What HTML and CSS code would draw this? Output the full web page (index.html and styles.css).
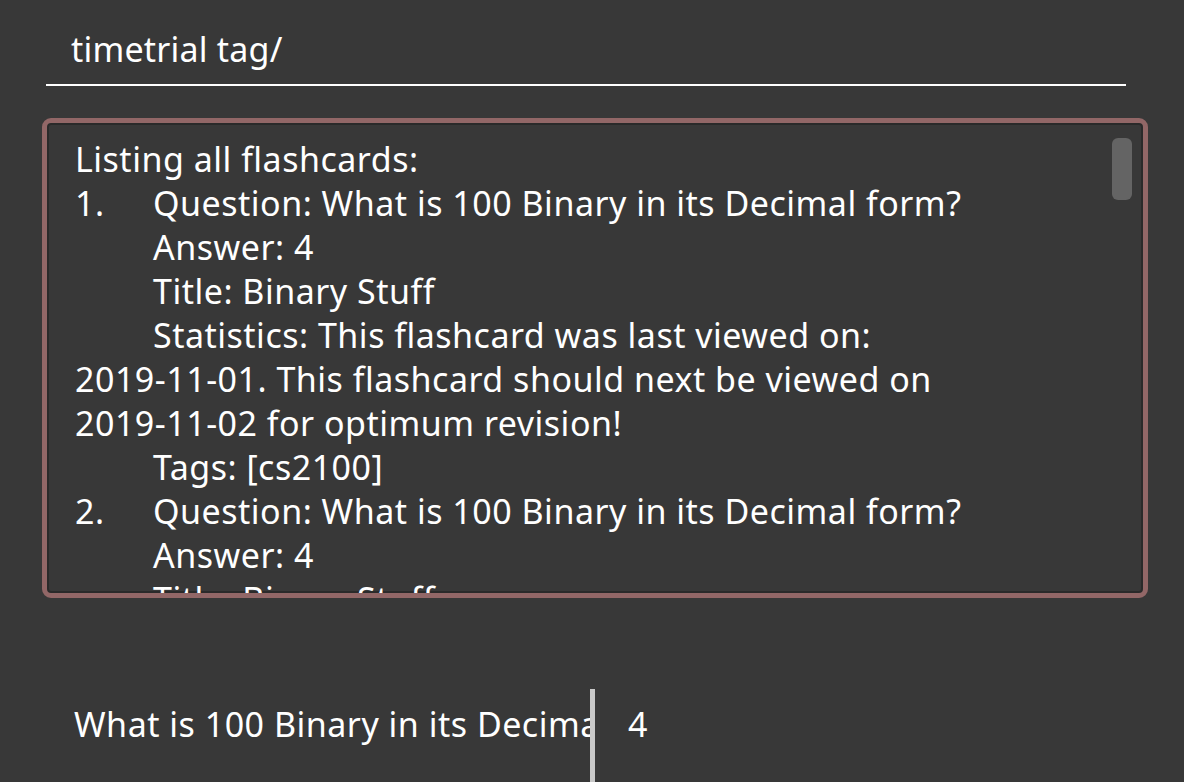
FILE: index.html
```html
<!DOCTYPE html>
<html>
<head>
<meta charset="utf-8">
<link rel="stylesheet" href="styles.css">
</head>
<body>
<div class="app">
  <div class="command">timetrial tag/</div>
  <div class="result">
    <div class="result-text">
      <div class="line">Listing all flashcards:</div>
      <div class="line"><span class="num">1.</span>Question: What is 100 Binary in its Decimal form?</div>
      <div class="line indent">Answer: 4</div>
      <div class="line indent">Title: Binary Stuff</div>
      <div class="line indent">Statistics: This flashcard was last viewed on:</div>
      <div class="line">2019-11-01. This flashcard should next be viewed on</div>
      <div class="line">2019-11-02 for optimum revision!</div>
      <div class="line indent">Tags: [cs2100]</div>
      <div class="line"><span class="num">2.</span>Question: What is 100 Binary in its Decimal form?</div>
      <div class="line indent">Answer: 4</div>
      <div class="line indent">Title: Binary Stuff</div>
      <div class="line indent">Statistics: This flashcard was last viewed on:</div>
    </div>
    <div class="thumb"></div>
  </div>
  <div class="table-row">
    <div class="cell question">What is 100 Binary in its Decimal form?</div>
    <div class="divider"></div>
    <div class="cell answer">4</div>
  </div>
</div>
</body>
</html>
```
FILE: styles.css
```css
html, body {
  margin: 0;
  padding: 0;
  background: #383838;
}
body {
  font-family: "Noto Sans", "Open Sans", sans-serif;
  font-size: 34px;
  letter-spacing: 0.5px;
  color: #ffffff;
}
.app {
  display: flex;
  flex-direction: column;
  width: 1184px;
  height: 782px;
  padding-left: 42px;
  box-sizing: border-box;
  overflow: hidden;
}
.command {
  margin-left: 4px;
  width: 1080px;
  box-sizing: border-box;
  padding: 27px 0 13px 25px;
  line-height: 44px;
  border-bottom: 2px solid #ffffff;
  white-space: nowrap;
  letter-spacing: 0.2px;
}
.result {
  position: relative;
  margin-top: 32px;
  width: 1106px;
  height: 480px;
  box-sizing: border-box;
  border: 5px solid #926767;
  border-radius: 9px;
  box-shadow: inset 0 0 0 2px #2a2a2a;
  overflow: hidden;
  flex: none;
}
.result-text {
  padding: 14px 0 0 28px;
  line-height: 44px;
}
.line {
  display: flex;
  white-space: nowrap;
  height: 44px;
}
.num {
  width: 78px;
  flex: none;
}
.indent {
  padding-left: 78px;
}
.thumb {
  position: absolute;
  top: 15px;
  right: 11px;
  width: 20px;
  height: 62px;
  border-radius: 6px;
  background: #646464;
}
.table-row {
  display: flex;
  margin-top: 91px;
  flex: 1;
}
.cell {
  line-height: 44px;
  padding-top: 13px;
  white-space: nowrap;
  overflow: hidden;
}
.question {
  width: 548px;
  padding-left: 32px;
  box-sizing: border-box;
}
.divider {
  width: 5px;
  background: #c8c8c8;
  flex: none;
}
.answer {
  padding-left: 33px;
}
```
